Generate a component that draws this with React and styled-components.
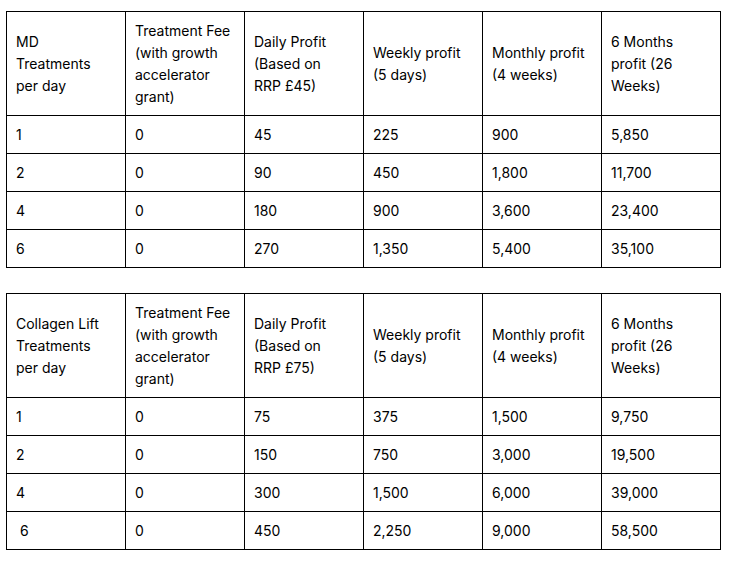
import React from "react";
import styled, { createGlobalStyle } from "styled-components";

const headers = (product, rrp) => [
  product,
  "Treatment Fee (with growth accelerator grant)",
  `Daily Profit (Based on RRP £${rrp})`,
  "Weekly profit (5 days)",
  "Monthly profit (4 weeks)",
  "6 Months profit (26 Weeks)",
];

const tables = [
  {
    head: headers("MD Treatments per day", 45),
    rows: [
      ["1", "0", "45", "225", "900", "5,850"],
      ["2", "0", "90", "450", "1,800", "11,700"],
      ["4", "0", "180", "900", "3,600", "23,400"],
      ["6", "0", "270", "1,350", "5,400", "35,100"],
    ],
  },
  {
    head: headers("Collagen Lift Treatments per day", 75),
    rows: [
      ["1", "0", "75", "375", "1,500", "9,750"],
      ["2", "0", "150", "750", "3,000", "19,500"],
      ["4", "0", "300", "1,500", "6,000", "39,000"],
      ["\u00a06", "0", "450", "2,250", "9,000", "58,500"],
    ],
  },
];

const App = () => (
  <>
    <GlobalStyle />
    <Page>
      {tables.map((t, i) => (
        <ProfitTable key={i}>
          <colgroup>
            {t.head.map((_, c) => (
              <Column key={c} />
            ))}
          </colgroup>
          <tbody>
            <HeadRow>
              {t.head.map((h, c) => (
                <Cell key={c}>{h}</Cell>
              ))}
            </HeadRow>
            {t.rows.map((r, ri) => (
              <BodyRow key={ri}>
                {r.map((v, c) => (
                  <Cell key={c}>{v}</Cell>
                ))}
              </BodyRow>
            ))}
          </tbody>
        </ProfitTable>
      ))}
    </Page>
  </>
);

const GlobalStyle = createGlobalStyle`
  body {
    margin: 0;
    background: #fff;
  }
`;

const Page = styled.div`
  display: flex;
  flex-direction: column;
  gap: 25px;
  padding: 11px 6px;
  font-family: Inter, "Liberation Sans", sans-serif;
  font-size: 14px;
  line-height: 22px;
  color: #000;
`;

const ProfitTable = styled.table`
  border-collapse: collapse;
  table-layout: fixed;
  width: 714px;
`;

const Column = styled.col`
  width: 119px;
`;

const HeadRow = styled.tr`
  height: 104px;
`;

const BodyRow = styled.tr`
  height: 38px;
`;

const Cell = styled.td`
  border: 1px solid #000;
  padding: 1px 13px 0 9px;
  vertical-align: middle;
  text-align: left;
`;

export default App;
